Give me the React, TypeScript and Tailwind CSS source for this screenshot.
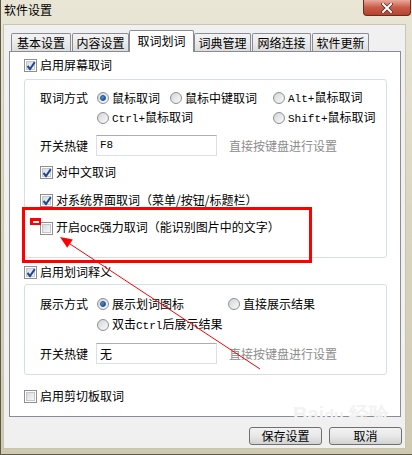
import React from "react";

const M = ({ children }: { children: React.ReactNode }) => (
  <span className="font-['Liberation_Mono',monospace] text-[11px]">{children}</span>
);

function Check({ checked }: { checked?: boolean }) {
  return (
    <span className="w-[13px] h-[13px] border border-[#8e8f8f] bg-white flex items-center justify-center shrink-0 relative">
      <span className="w-[9px] h-[9px] border border-[#c3c7cc] bg-gradient-to-br from-[#d7dadf] to-[#f8f8f8]" />
      {checked && (
        <svg className="absolute left-[1px] top-[1px]" width="10" height="10" viewBox="0 0 10 10">
          <path d="M1.5 5 L4 8 L8.8 1.2" fill="none" stroke="#22478f" strokeWidth="2" />
        </svg>
      )}
    </span>
  );
}

function Radio({ checked }: { checked?: boolean }) {
  return (
    <span className="w-[12px] h-[12px] rounded-full border border-[#8e8f8f] bg-gradient-to-br from-[#d2d4d8] to-[#fbfbfb] flex items-center justify-center shrink-0">
      {checked && (
        <span className="w-[6px] h-[6px] rounded-full bg-gradient-to-br from-[#62a8e8] to-[#0d4a9b] border border-[#1b4f8f]" />
      )}
    </span>
  );
}

function RadioItem({ checked, children, w }: { checked?: boolean; children: React.ReactNode; w?: string }) {
  return (
    <div className={`flex items-center ${w ?? ""}`}>
      <Radio checked={checked} />
      <span className="ml-[3px] whitespace-nowrap">{children}</span>
    </div>
  );
}

function CheckRow({ checked, children, cls }: { checked?: boolean; children: React.ReactNode; cls: string }) {
  return (
    <div className={`h-[20px] flex items-center ${cls}`}>
      <Check checked={checked} />
      <span className="ml-[3px] whitespace-nowrap">{children}</span>
    </div>
  );
}

function Hotkey({ value, mt }: { value: React.ReactNode; mt: string }) {
  return (
    <div className={`h-[21px] flex items-center ${mt}`}>
      <span className="w-[56px] whitespace-nowrap">开关热键</span>
      <div className="w-[121px] h-[21px] border border-[#dbdfe6] border-t-[#abadb3] bg-white flex items-center pl-[3px]">
        {value}
      </div>
      <span className="ml-[12px] text-[#8c8c8c] whitespace-nowrap">直接按键盘进行设置</span>
    </div>
  );
}

function Tab({ label, w, ml, active }: { label: string; w: string; ml?: string; active?: boolean }) {
  if (active) {
    return (
      <div
        className={`${w} ${ml ?? ""} h-[22px] mb-[-1px] relative z-10 bg-white border border-b-0 border-[#898c95] rounded-t-[2px] flex items-start justify-center pt-[1px] leading-[18px]`}
      >
        {label}
      </div>
    );
  }
  return (
    <div
      className={`${w} ${ml ?? ""} h-[18px] bg-gradient-to-b from-[#f3f3f3] via-[#ebebeb] to-[#dcdcdc] border border-b-0 border-[#898c95] rounded-t-[2px] flex items-center justify-center leading-[16px]`}
    >
      {label}
    </div>
  );
}

function Button({ children }: { children: React.ReactNode }) {
  return (
    <div className="w-[73px] h-[18px] rounded-[3px] border border-[#707070] bg-gradient-to-b from-[#f2f2f2] via-[#e8e8e8] to-[#d2d2d2] flex items-center justify-center leading-[16px]">
      {children}
    </div>
  );
}

export default function App() {
  return (
    <div className="w-[412px] h-[455px] relative overflow-hidden flex flex-col bg-gradient-to-b from-[#e9e6d6] via-[#d9d4bd] to-[#cfc9b0] font-['Noto_Sans_CJK_SC',sans-serif] text-[12px] text-black border-l border-b border-[#5e5a48]">
      {/* Title bar */}
      <div className="h-[24px] flex items-start justify-between shrink-0">
        <span className="pl-[3px] pt-[2px] leading-[16px] text-[12px] text-black">软件设置</span>
        <div className="mr-[1px] w-[48px] h-[16px] rounded-b-[4px] border border-t-0 border-[#6b2a1e] bg-gradient-to-b from-[#e9a99c] via-[#c75c48] to-[#b8412d] flex items-center justify-center">
          <svg width="12" height="10" viewBox="0 0 12 10">
            <path d="M2 1 L10 9 M10 1 L2 9" stroke="#4a2a24" strokeWidth="3.4" strokeLinecap="square" />
            <path d="M2 1 L10 9 M10 1 L2 9" stroke="#ffffff" strokeWidth="2" strokeLinecap="square" />
          </svg>
        </div>
      </div>

      {/* Client area */}
      <div className="ml-[2px] w-[403px] h-[425px] bg-[#f0f0f0] border border-[#c8c5b3] flex flex-col">
        {/* Tabs */}
        <div className="h-[26px] pt-[5px] pl-[7px] flex items-end">
          <Tab label="基本设置" w="w-[60px]" />
          <Tab label="内容设置" w="w-[57px]" ml="ml-[1px]" />
          <Tab label="取词划词" w="w-[65px]" active />
          <Tab label="词典管理" w="w-[57px]" />
          <Tab label="网络连接" w="w-[59px]" ml="ml-[1px]" />
          <Tab label="软件更新" w="w-[57px]" ml="ml-[1px]" />
        </div>

        {/* Panel */}
        <div className="ml-[5px] w-[392px] h-[366px] border border-[#898c95] bg-white flex flex-col">
          <CheckRow checked cls="mt-[3px] pl-[14px]">启用屏幕取词</CheckRow>

          {/* Group 1 */}
          <div className="ml-[14px] mt-[4px] w-[363px] border border-[#d5dfe5] rounded-[3px] pt-[8px] pb-[19px] pl-[15px] flex flex-col">
            <div className="h-[20px] flex items-center">
              <span className="w-[57px] whitespace-nowrap">取词方式</span>
              <RadioItem checked w="w-[73px]">鼠标取词</RadioItem>
              <RadioItem w="w-[103px]">鼠标中键取词</RadioItem>
              <RadioItem>
                <M>Alt+</M>鼠标取词
              </RadioItem>
            </div>
            <div className="h-[20px] flex items-center">
              <span className="w-[57px]" />
              <RadioItem w="w-[176px]">
                <M>Ctrl+</M>鼠标取词
              </RadioItem>
              <RadioItem>
                <M>Shift+</M>鼠标取词
              </RadioItem>
            </div>
            <Hotkey value={<M>F8</M>} mt="mt-[7px]" />
            <CheckRow checked cls="mt-[6px]">对中文取词</CheckRow>
            <CheckRow checked cls="mt-[8px]">对系统界面取词（菜单/按钮/标题栏）</CheckRow>
            <CheckRow cls="mt-[8px]">
              开启<M>OCR</M>强力取词（能识别图片中的文字）
            </CheckRow>
          </div>

          <CheckRow checked cls="mt-[4px] pl-[14px]">启用划词释义</CheckRow>

          {/* Group 2 */}
          <div className="ml-[14px] mt-[2px] w-[363px] border border-[#d5dfe5] rounded-[3px] pt-[9px] pb-[10px] pl-[15px] flex flex-col">
            <div className="h-[20px] flex items-center">
              <span className="w-[57px] whitespace-nowrap">展示方式</span>
              <RadioItem checked w="w-[131px]">展示划词图标</RadioItem>
              <RadioItem>直接展示结果</RadioItem>
            </div>
            <div className="h-[20px] mt-[1px] flex items-center">
              <span className="w-[57px]" />
              <RadioItem>
                双击<M>Ctrl</M>后展示结果
              </RadioItem>
            </div>
            <Hotkey value={<span>无</span>} mt="mt-[8px]" />
          </div>

          <CheckRow cls="mt-[11px] pl-[14px]">启用剪切板取词</CheckRow>
        </div>

        {/* Buttons */}
        <div className="mt-[10px] pr-[3px] flex justify-end gap-[7px]">
          <Button>保存设置</Button>
          <Button>取消</Button>
        </div>
      </div>

      {/* Watermark */}
      <div className="absolute left-[292px] top-[403px] text-[#f2f2f2] text-[20px] leading-[22px] font-['Liberation_Sans',sans-serif] font-bold pointer-events-none">
        Bai<span className="text-[16px]">du</span> 经验
      </div>

      {/* Red annotation rectangle */}
      <div className="absolute left-[21px] top-[207px] w-[290px] h-[56px] border-[3px] border-[#ff0000] pointer-events-none" />
      <div className="absolute left-[29px] top-[218px] w-[11px] h-[7px] bg-[#ff0000] pointer-events-none">
        <div className="absolute left-[3px] top-[3px] w-[6px] h-[2px] bg-white" />
      </div>

      {/* Red arrow */}
      <svg className="absolute left-0 top-0 pointer-events-none" width="412" height="455" viewBox="0 0 412 455">
        <line x1="259" y1="369" x2="66" y2="242" stroke="#ff0000" strokeWidth="1" />
        <polygon points="59,237 71.8,239.4 66.2,247.8" fill="#ff0000" />
      </svg>
    </div>
  );
}
